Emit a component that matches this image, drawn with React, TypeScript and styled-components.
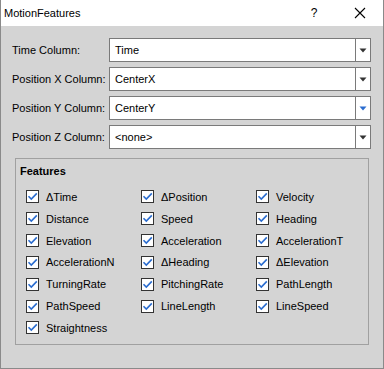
import React from 'react'
import styled, { createGlobalStyle } from 'styled-components'

const GlobalStyle = createGlobalStyle`
    html, body {
        margin: 0;
        padding: 0;
        background: #ffffff;
    }
    body {
        font-family: "Liberation Sans", Arial, sans-serif;
        font-size: 11px;
        color: #000000;
    }
`

type ComboRow = {
    label: string
    value: string
    focused?: boolean
}

const comboRows: Array<ComboRow> = [
    { label: 'Time Column:', value: 'Time' },
    { label: 'Position X Column:', value: 'CenterX' },
    { label: 'Position Y Column:', value: 'CenterY', focused: true },
    { label: 'Position Z Column:', value: '<none>' },
]

const features = [
    'ΔTime',
    'ΔPosition',
    'Velocity',
    'Distance',
    'Speed',
    'Heading',
    'Elevation',
    'Acceleration',
    'AccelerationT',
    'AccelerationN',
    'ΔHeading',
    'ΔElevation',
    'TurningRate',
    'PitchingRate',
    'PathLength',
    'PathSpeed',
    'LineLength',
    'LineSpeed',
    'Straightness',
]

const CheckMark = () => (
    <svg width="11" height="11" viewBox="0 0 11 11">
        <path d="M1.5 5.2 L4.3 8 L9.8 2.4" fill="none" stroke="#2a6ccf" strokeWidth="1.6" />
    </svg>
)

const DropArrow = ({ focused }: { focused?: boolean }) => (
    <svg width="8" height="5" viewBox="0 0 8 5">
        <path d="M0.5 0.5 H7.5 L4 4.5 Z" fill={focused ? '#2a6ccf' : '#333333'} />
    </svg>
)

const CloseIcon = () => (
    <svg width="12" height="12" viewBox="0 0 12 12">
        <path d="M1 1 L11 11 M11 1 L1 11" stroke="#000000" strokeWidth="1.1" />
    </svg>
)

export default function App() {
    return (
        <>
            <GlobalStyle />
            <Window>
                <TitleBar>
                    <Title>MotionFeatures</Title>
                    <TitleButtons>
                        <HelpButton>?</HelpButton>
                        <CloseButton>
                            <CloseIcon />
                        </CloseButton>
                    </TitleButtons>
                </TitleBar>
                <Body>
                    <Form>
                        {comboRows.map(row => (
                            <React.Fragment key={row.label}>
                                <Label>{row.label}</Label>
                                <Combo>
                                    <ComboValue>{row.value}</ComboValue>
                                    <ComboButton>
                                        <DropArrow focused={row.focused} />
                                    </ComboButton>
                                </Combo>
                            </React.Fragment>
                        ))}
                    </Form>
                    <GroupBox>
                        <GroupTitle>Features</GroupTitle>
                        <FeatureGrid>
                            {features.map(name => (
                                <FeatureItem key={name}>
                                    <CheckBox>
                                        <CheckMark />
                                    </CheckBox>
                                    <FeatureLabel>{name}</FeatureLabel>
                                </FeatureItem>
                            ))}
                        </FeatureGrid>
                    </GroupBox>
                </Body>
            </Window>
        </>
    )
}

const Window = styled.div`
    width: 384px;
    height: 369px;
    box-sizing: border-box;
    display: flex;
    flex-direction: column;
    border: 1px solid #8a8a8a;
    border-top: none;
    background: #d4d4d4;
`
const TitleBar = styled.div`
    height: 26px;
    flex-shrink: 0;
    display: flex;
    align-items: center;
    justify-content: space-between;
    background: #ffffff;
    padding-left: 3px;
`
const Title = styled.div`
    font-size: 11px;
    color: #000000;
`
const TitleButtons = styled.div`
    display: flex;
    align-items: center;
    height: 100%;
`
const HelpButton = styled.div`
    width: 46px;
    text-align: center;
    font-size: 12px;
`
const CloseButton = styled.div`
    width: 46px;
    display: flex;
    align-items: center;
    justify-content: center;
`
const Body = styled.div`
    flex: 1;
    display: flex;
    flex-direction: column;
    padding: 12px 12px 0 11px;
`
const Form = styled.div`
    display: grid;
    grid-template-columns: 97px 262px;
    grid-auto-rows: 24px;
    row-gap: 5px;
    align-items: center;
`
const Label = styled.div`
    white-space: nowrap;
`
const Combo = styled.div`
    height: 24px;
    box-sizing: border-box;
    display: flex;
    background: #ffffff;
    border: 1px solid #7a7a7a;
`
const ComboValue = styled.div`
    flex: 1;
    display: flex;
    align-items: center;
    padding-left: 5px;
`
const ComboButton = styled.div`
    width: 14px;
    display: flex;
    align-items: center;
    justify-content: center;
    border-left: 1px solid #7a7a7a;
`
const GroupBox = styled.div`
    margin: 9px 2px 0 3px;
    height: 187px;
    box-sizing: border-box;
    border: 1px solid #a0a0a0;
    padding: 5px 0 0 4px;
`
const GroupTitle = styled.div`
    font-weight: bold;
    height: 16px;
    line-height: 14px;
`
const FeatureGrid = styled.div`
    display: grid;
    grid-template-columns: repeat(3, 115px);
    grid-auto-rows: 21.85px;
    margin: 6px 0 0 6px;
`
const FeatureItem = styled.div`
    display: flex;
    align-items: center;
    gap: 7px;
`
const CheckBox = styled.div`
    width: 13px;
    height: 13px;
    box-sizing: border-box;
    border: 1px solid #333333;
    background: #ffffff;
    display: flex;
    align-items: center;
    justify-content: center;
`
const FeatureLabel = styled.div`
    white-space: nowrap;
`
